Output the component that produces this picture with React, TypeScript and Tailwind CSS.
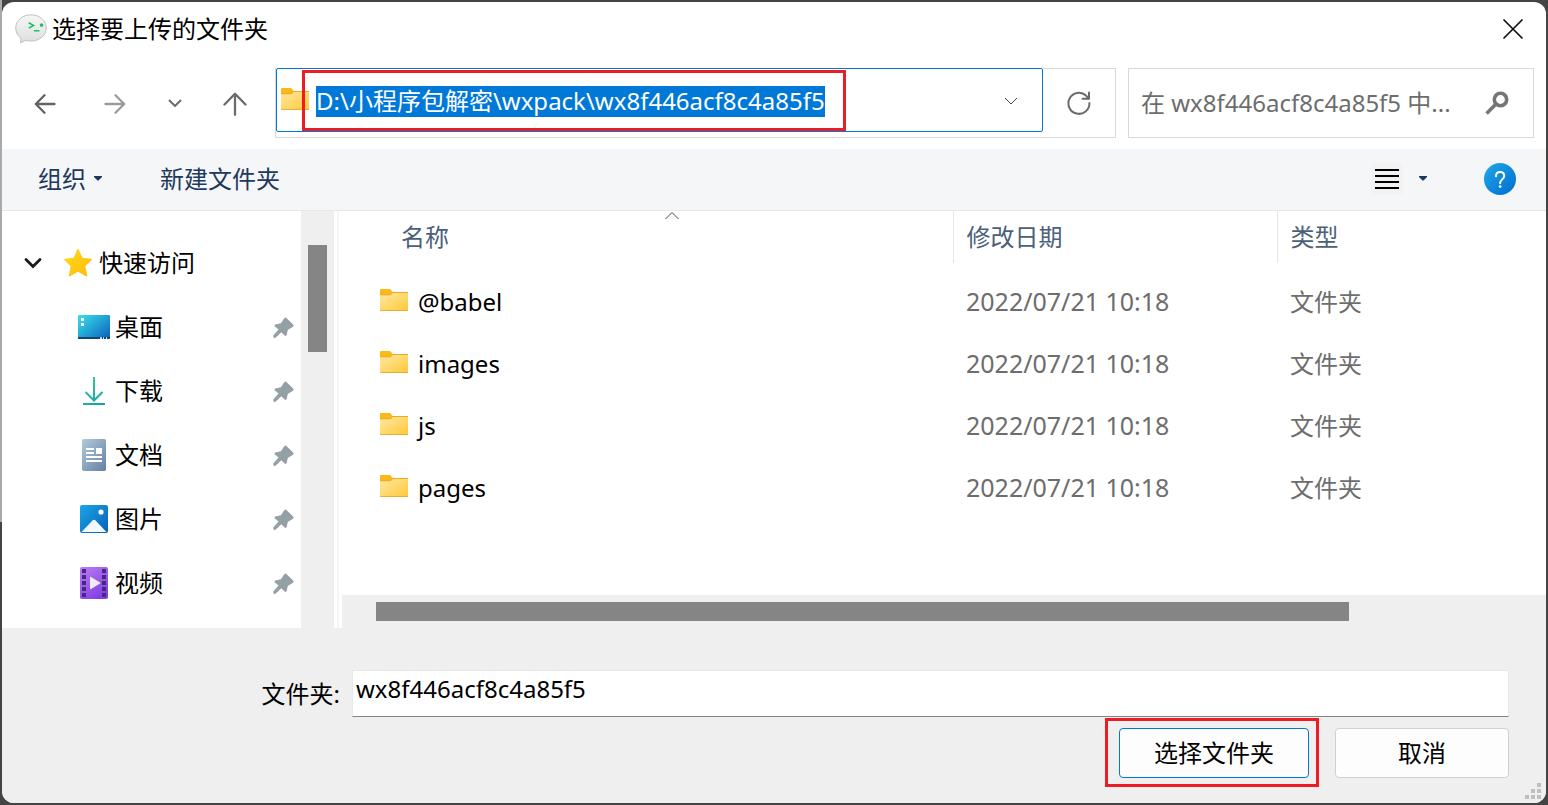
import React from 'react';

type IconProps = { className?: string };

const AppIcon = () => (
  <svg width="32" height="30" viewBox="0 0 32 30" aria-hidden="true">
    <defs>
      <linearGradient id="bubble" x1="0" y1="0" x2="0" y2="1">
        <stop offset="0" stopColor="#f6f6f6" />
        <stop offset="1" stopColor="#dfdfdf" />
      </linearGradient>
    </defs>
    <path
      d="M16 .8C24.5.8 31.3 6.500 31.300 13.900S24.500 27 16 27c-1.800 0-3.600-.2-5.200-.700L5.500 28.800l.6-4.500C2.900 21.900.7 18.200.7 13.900.7 6.500 7.500.8 16 .8z"
      fill="url(#bubble)"
      stroke="#b4b4b4"
      strokeWidth="0.800"
    />
    <path d="M13.700 8.800l4.800 2.600-4.800 2.700" fill="none" stroke="#12c466" strokeWidth="1.600" />
    <path d="M19 16.800h5.400" stroke="#12c466" strokeWidth="1.500" />
    <rect x="25" y="9.500" width="3.200" height="3.200" rx="0.800" fill="#12c466" />
  </svg>
);

const CloseIcon = () => (
  <svg width="22" height="22" viewBox="0 0 22 22" aria-hidden="true">
    <path d="M1.500 1.500l19 19M20.500 1.500l-19 19" stroke="#111" strokeWidth="1.700" />
  </svg>
);

const BackIcon = () => (
  <svg width="22" height="20" viewBox="0 0 22 20" fill="none" stroke="#636363" strokeWidth="2.300" strokeLinecap="round" strokeLinejoin="round" aria-hidden="true">
    <path d="M20.500 10H2M10.500 1.300L1.800 10l8.700 8.700" />
  </svg>
);

const ForwardIcon = () => (
  <svg width="22" height="20" viewBox="0 0 22 20" fill="none" stroke="#9b9b9b" strokeWidth="2.300" strokeLinecap="round" strokeLinejoin="round" aria-hidden="true">
    <path d="M1.500 10H20M11.500 1.300l8.700 8.700-8.700 8.700" />
  </svg>
);

const UpIcon = () => (
  <svg width="24" height="24" viewBox="0 0 24 24" fill="none" stroke="#6b6b6b" strokeWidth="2.300" strokeLinecap="round" strokeLinejoin="round" aria-hidden="true">
    <path d="M12 22.800V2M1.500 12.500L12 1.800l10.500 10.700" />
  </svg>
);

const ChevronDown = ({ className = '' }: IconProps) => (
  <svg className={className} width="14" height="8" viewBox="0 0 14 8" fill="none" stroke="currentColor" aria-hidden="true">
    <path d="M1 1l6 6 6-6" />
  </svg>
);

const RefreshIcon = () => (
  <svg width="24" height="24" viewBox="0 0 24 24" fill="none" stroke="#6b6b6b" strokeWidth="2" strokeLinecap="round" aria-hidden="true">
    <path d="M22.400 12A10.500 10.500 0 1 1 19 4.600l2.500 2.900" />
    <path d="M22 1.500v6.300h-6.500" strokeLinejoin="round" />
  </svg>
);

const SearchIcon = () => (
  <svg width="24" height="24" viewBox="0 0 24 24" fill="none" stroke="#757575" aria-hidden="true">
    <circle cx="15.500" cy="8.500" r="6.200" strokeWidth="3.600" />
    <path d="M11 13L1.600 22.400" strokeWidth="3.600" />
  </svg>
);

const Caret = () => (
  <svg width="8" height="5" viewBox="0 0 8 5" aria-hidden="true">
    <path d="M0 0h8v1L4.500 4.500h-1L0 1z" fill="#1e395b" />
  </svg>
);

const ListIcon = () => (
  <svg width="24" height="20" viewBox="0 0 24 20" fill="#000" aria-hidden="true">
    <rect y="0" width="24" height="2" />
    <rect y="6" width="24" height="2" />
    <rect y="12" width="24" height="2" />
    <rect y="18" width="24" height="2" />
  </svg>
);

const HelpIcon = () => (
  <svg width="32" height="32" viewBox="0 0 32 32" aria-hidden="true">
    <defs>
      <linearGradient id="help" x1="0" y1="0" x2="1" y2="1">
        <stop offset="0.100" stopColor="#1fa2e6" />
        <stop offset="0.900" stopColor="#0172d3" />
      </linearGradient>
    </defs>
    <circle cx="16" cy="16" r="16" fill="url(#help)" />
    <path d="M12 13.200c0-2.500 1.700-4.200 4.100-4.200s4.100 1.600 4.100 4c0 3.200-4.100 3.600-4.100 7.200" fill="none" stroke="#fff" strokeWidth="2" strokeLinecap="round" />
    <circle cx="16.100" cy="23.600" r="1.400" fill="#fff" />
  </svg>
);

const FolderIcon = () => (
  <svg className="shrink-0" width="28" height="26" viewBox="0 0 28 26" aria-hidden="true">
    <defs>
      <linearGradient id="folder" x1="0" y1="0" x2="1" y2="1">
        <stop offset="0" stopColor="#ffe8a3" />
        <stop offset="1" stopColor="#fec938" />
      </linearGradient>
    </defs>
    <path d="M0 1.200Q0 0 1.200 0h8.300q1 0 1.600.9L12.500 3H27q1 0 1 1v4H0z" fill="#fbb918" />
    <path d="M0 6h9.500q1 0 1.700-.7l.8-.8Q12.500 4 13.300 4H28v16.800q0 1.200-1.200 1.200H1.200Q0 22 0 20.800z" fill="url(#folder)" />
    <path d="M0 20.500q.2.700 1.200.7h25.600q1 0 1.200-.7v.3q0 1.200-1.200 1.200H1.200Q0 22 0 20.800z" fill="#e6a12a" />
    <path d="M0 5.800h9.500q1 0 1.700-.7l.8-.7Q12.500 3.500 13.300 3.500H28" fill="none" stroke="#e9a820" strokeWidth="0.900" />
  </svg>
);

const StarIcon = () => (
  <svg width="28" height="30" viewBox="0 0 28 30" aria-hidden="true">
    <defs>
      <linearGradient id="star" x1="0" y1="0" x2="1" y2="1">
        <stop offset="0" stopColor="#ffdb1c" />
        <stop offset="1" stopColor="#fdb90b" />
      </linearGradient>
    </defs>
    <path
      d="M13.200 1.500q.8-1.500 1.600 0l3.600 8.200 8.800 1.100q1.300.3.400 1.300l-6.300 6.200 1.900 9.200q.1 1.400-1.100.8L14 23.700l-8.100 4.600q-1.200.5-1.100-.8l1.900-9.200L.4 12.100q-.9-1 .4-1.300l8.800-1.100z"
      fill="url(#star)"
    />
  </svg>
);

const DesktopIcon = () => (
  <svg width="32" height="24" viewBox="0 0 32 24" aria-hidden="true">
    <defs>
      <linearGradient id="desk" x1="0" y1="0" x2="1" y2="0.900">
        <stop offset="0" stopColor="#3be0e8" />
        <stop offset="0.500" stopColor="#22a5d6" />
        <stop offset="1" stopColor="#0c62bd" />
      </linearGradient>
    </defs>
    <rect width="32" height="24" rx="1" fill="url(#desk)" />
    <path d="M0 22h32v1q0 1-1 1H1q-1 0-1-1z" fill="#0b4a70" />
    <path d="M3 3h3v3H3zM3 8h3v3H3z" fill="#fff" />
    <path d="M22 22.200h2V24h-2zM25 22.200h1V24h-1zM28 22.200h1V24h-1z" fill="#cfe9f8" />
  </svg>
);

const DownloadIcon = () => (
  <svg width="22" height="28" viewBox="0 0 22 28" fill="none" aria-hidden="true">
    <defs>
      <linearGradient id="down" gradientUnits="userSpaceOnUse" x1="0" y1="0" x2="22" y2="28">
        <stop offset="0" stopColor="#3fd08f" />
        <stop offset="1" stopColor="#0e9fae" />
      </linearGradient>
    </defs>
    <path d="M11 0v23M2.500 15l8.500 8.500 8.500-8.500M0 27h22" stroke="url(#down)" strokeWidth="2" />
  </svg>
);

const DocumentIcon = () => (
  <svg width="24" height="32" viewBox="0 0 24 32" aria-hidden="true">
    <defs>
      <linearGradient id="doc" x1="0" y1="0" x2="1" y2="1">
        <stop offset="0" stopColor="#b3c9dc" />
        <stop offset="1" stopColor="#6480a3" />
      </linearGradient>
    </defs>
    <rect width="24" height="32" rx="1.800" fill="url(#doc)" />
    <path d="M4 9h8v2H4zM4 13h8v2H4zM4 17h16v2H4zM4 21h16v2H4zM14 9h6v6h-6z" fill="#fff" />
  </svg>
);

const PictureIcon = () => (
  <svg width="28" height="28" viewBox="0 0 28 28" aria-hidden="true">
    <defs>
      <linearGradient id="pic" x1="0" y1="0" x2="1" y2="1">
        <stop offset="0" stopColor="#1da5e8" />
        <stop offset="1" stopColor="#0560b6" />
      </linearGradient>
    </defs>
    <rect width="28" height="28" rx="2" fill="url(#pic)" />
    <path d="M1.500 27L12.500 15.500q1.500-1.400 3 0L26.500 27z" fill="#f1f8fe" />
    <circle cx="21" cy="7" r="2.600" fill="#fff" />
  </svg>
);

const VideoIcon = () => (
  <svg width="28" height="32" viewBox="0 0 28 32" aria-hidden="true">
    <defs>
      <linearGradient id="vid" x1="0" y1="0" x2="0.600" y2="1">
        <stop offset="0" stopColor="#bb7df2" />
        <stop offset="1" stopColor="#8540e4" />
      </linearGradient>
    </defs>
    <rect width="28" height="32" rx="1.800" fill="url(#vid)" />
    <path
      d="M2 2h4v4H2zM2 8h4v4H2zM2 14h4v4H2zM2 20h4v4H2zM2 26h4v4H2zM22 2h4v4h-4zM22 8h4v4h-4zM22 14h4v4h-4zM22 20h4v4h-4zM22 26h4v4h-4z"
      fill="#46287f"
    />
    <path d="M10 10.500q0-1 1-.5l9 5.500q.7.500 0 1l-9 5.500q-1 .5-1-.5z" fill="#f0ecf5" />
  </svg>
);

const PinIcon = () => (
  <svg width="21" height="21" viewBox="0 0 21 21" fill="#949fa6" aria-hidden="true">
    <path d="M11.200 1.200q1-1.300 2.200-.2l6.700 6.600q1 1.100-.2 2.100l-5.100 3.200-1.100 4.900q-.6 1.800-2 .7L8.300 15.200l-5.800 5.500H.3v-2.200L5.500 12.600 2 9.600q-1.200-1.300.4-2L8 6.300z" />
  </svg>
);

const quickAccess = [
  { label: '桌面', icon: <DesktopIcon /> },
  { label: '下载', icon: <DownloadIcon /> },
  { label: '文档', icon: <DocumentIcon /> },
  { label: '图片', icon: <PictureIcon /> },
  { label: '视频', icon: <VideoIcon /> },
];

const folders = ['@babel', 'images', 'js', 'pages'];

function TitleBar() {
  return (
    <header className="flex h-14 items-center pb-[2px] pl-[13px] pr-[9px]">
      <AppIcon />
      <h1 className="ml-[5px] flex-1">选择要上传的文件夹</h1>
      <button type="button" aria-label="关闭" className="flex h-12 w-12 items-center justify-center">
        <CloseIcon />
      </button>
    </header>
  );
}

function NavigationBar() {
  return (
    <nav className="mt-[10px] mb-[11px] flex h-[70px] pl-2 pr-3">
      <button type="button" aria-label="后退" className="flex w-[70px] items-center justify-center pt-[2px]"><BackIcon /></button>
      <button type="button" aria-label="前进" className="flex w-[70px] items-center justify-center pt-[2px]"><ForwardIcon /></button>
      <button type="button" aria-label="最近浏览的位置" className="flex w-[50px] items-center justify-center text-[#6b6b6b]"><ChevronDown className="stroke-2" /></button>
      <button type="button" aria-label="上移" className="flex w-[70px] items-center justify-center pt-[2px]"><UpIcon /></button>
      <div className="ml-[5px] flex flex-1 items-start border border-t-0 border-[#d9d9d9]">
        <div className="relative flex h-16 flex-1 items-center rounded-[2px] border border-[#0078d4] pt-[2px] pl-1 pr-6">
          <FolderIcon />
          <input
            type="text"
            aria-label="地址"
            defaultValue="D:\小程序包解密\wxpack\wx8f446acf8c4a85f5"
            className="ml-[7px] h-[31px] [field-sizing:content] bg-[#0078d7] text-white outline-none"
          />
          <button type="button" aria-label="以前的位置" className="ml-auto text-[#444]"><ChevronDown /></button>
          <div className="pointer-events-none absolute top-[1px] bottom-0 left-[25px] w-[544px] border-3 border-[#ed1c24]" />
        </div>
        <button type="button" aria-label="刷新" className="flex h-full w-[72px] items-center justify-center border-t border-[#d9d9d9]"><RefreshIcon /></button>
      </div>
      <div className="ml-3 flex w-[406px] items-center border border-[#d9d9d9] pl-3 pr-6">
        <input
          type="text"
          aria-label="搜索"
          placeholder="在 wx8f446acf8c4a85f5 中..."
          className="min-w-0 flex-1 placeholder:text-[#6d6d6d] outline-none"
        />
        <button type="button" aria-label="开始搜索"><SearchIcon /></button>
      </div>
    </nav>
  );
}

function Toolbar() {
  return (
    <div className="flex h-[62px] items-center border-b border-[#e6e7e8] bg-[#f4f6f8] pb-[2px] pl-9 pr-[30px] text-[#1e395b]">
      <button type="button" className="flex items-center gap-2">组织<Caret /></button>
      <button type="button" className="ml-[58px]">新建文件夹</button>
      <button type="button" aria-label="更改视图" className="ml-auto flex h-8 w-8 items-center justify-center rounded bg-[#f2f2f2]"><ListIcon /></button>
      <button type="button" aria-label="更多选项" className="ml-4 flex h-8 items-center"><Caret /></button>
      <button type="button" aria-label="帮助" className="ml-[57px]"><HelpIcon /></button>
    </div>
  );
}

function Sidebar() {
  return (
    <aside className="flex w-[332px] shrink-0">
      <div className="flex-1 pt-5">
        <button type="button" className="flex h-16 w-full items-center pl-[22px]">
          <svg width="18" height="12" viewBox="0 0 18 12" fill="none" aria-hidden="true">
            <path d="M2 2.500l7 7 7-7" stroke="#1b1b1b" strokeWidth="2.800" strokeLinecap="round" />
          </svg>
          <span className="ml-[22px]"><StarIcon /></span>
          <span className="ml-[7px]">快速访问</span>
        </button>
        <ul>
          {quickAccess.map((item) => (
            <li key={item.label} className="flex h-16 items-center pl-[76px] pr-[7px]">
              <a href="#" className="flex flex-1 items-center gap-[5px]">
                <span className="flex w-8 justify-center">{item.icon}</span>
                {item.label}
              </a>
              <PinIcon />
            </li>
          ))}
        </ul>
      </div>
      <div className="flex w-[33px] justify-center bg-[#efefef] pt-[34px]">
        <div className="h-[107px] w-[19px] bg-[#858585]" />
      </div>
    </aside>
  );
}

function FileList() {
  return (
    <section className="flex min-w-0 flex-1 flex-col">
      <table className="w-full table-fixed border-collapse text-left">
        <colgroup>
          <col />
          <col className="w-[324px]" />
          <col className="w-[269px]" />
        </colgroup>
        <thead className="text-[#4c607a]">
          <tr className="h-[52px]">
            <th className="relative pl-[59px] font-normal">
              名称
              <svg className="absolute left-[323px] top-0 text-[#444]" width="14" height="9" viewBox="0 0 14 9" fill="none" stroke="currentColor" aria-hidden="true">
                <path d="M.5 8L7 1.500 13.500 8" />
              </svg>
            </th>
            <th className="border-l border-[#e5e5e5] pl-[13px] font-normal">修改日期</th>
            <th className="border-l border-[#e5e5e5] pl-[13px] font-normal">类型</th>
          </tr>
        </thead>
        <tbody className="text-[#6d6d6d]">
          <tr className="h-2"><td colSpan={3} /></tr>
          {folders.map((name) => (
            <tr key={name} className="h-[62px]">
              <td className="pl-[38px] text-black">
                <div className="flex items-center gap-[10px]"><FolderIcon />{name}</div>
              </td>
              <td className="pl-[13px] text-[25px]">2022/07/21 10:18</td>
              <td className="pl-[13px]">文件夹</td>
            </tr>
          ))}
        </tbody>
      </table>
      <div className="mt-auto h-[33px] bg-[#efefef] pt-[7px] pl-[34px] pr-[197px]">
        <div className="h-[19px] bg-[#858585]" />
      </div>
    </section>
  );
}

function Footer() {
  return (
    <footer className="relative h-[175px] bg-[#efefef] pt-[42px] pr-[37px]">
      <div className="flex">
        <label htmlFor="folder" className="w-[350px] pr-3 pt-2 text-right">文件夹:</label>
        <input
          id="folder"
          type="text"
          defaultValue="wx8f446acf8c4a85f5"
          className="h-[47px] min-w-0 flex-1 border border-[#e8e8e8] border-b-[#858585] bg-white pb-[10px] pl-[3px] outline-none"
        />
      </div>
      <div className="mt-[11px] flex justify-end gap-[26px]">
        <div className="relative">
          <button type="button" className="h-[50px] w-[190px] rounded border border-[#0078d4] bg-[#fdfdfd]">选择文件夹</button>
          <div className="pointer-events-none absolute -top-[10px] -right-[10px] -bottom-[9px] -left-[14px] border-3 border-[#ed1c24]" />
        </div>
        <button type="button" className="h-[50px] w-[174px] rounded border border-[#d0d0d0] bg-[#fdfdfd]">取消</button>
      </div>
      <svg className="absolute right-[5px] bottom-1" width="16" height="16" viewBox="0 0 16 16" fill="#bfbfbf" aria-hidden="true">
        <path d="M12 0h4v4h-4zM6 6h4v4H6zM12 6h4v4h-4zM0 12h4v4H0zM6 12h4v4H6zM12 12h4v4h-4z" />
      </svg>
    </footer>
  );
}

export default function App() {
  return (
    <div className="flex min-h-screen flex-col bg-[linear-gradient(to_bottom,#a9a9a9_522px,#444_522px),linear-gradient(#444,#444)] bg-[size:2px_100%,100%_100%] bg-no-repeat p-[2px] font-['Noto_Sans','Noto_Sans_CJK_SC',sans-serif] text-2xl text-black">
      <div className="flex flex-1 flex-col overflow-hidden rounded-xl bg-white">
        <TitleBar />
        <NavigationBar />
        <Toolbar />
        <main className="flex flex-1">
          <Sidebar />
          <div className="mr-[3px] ml-[3px] w-[2px] bg-[#f5f5f5]" />
          <FileList />
        </main>
        <Footer />
      </div>
    </div>
  );
}
